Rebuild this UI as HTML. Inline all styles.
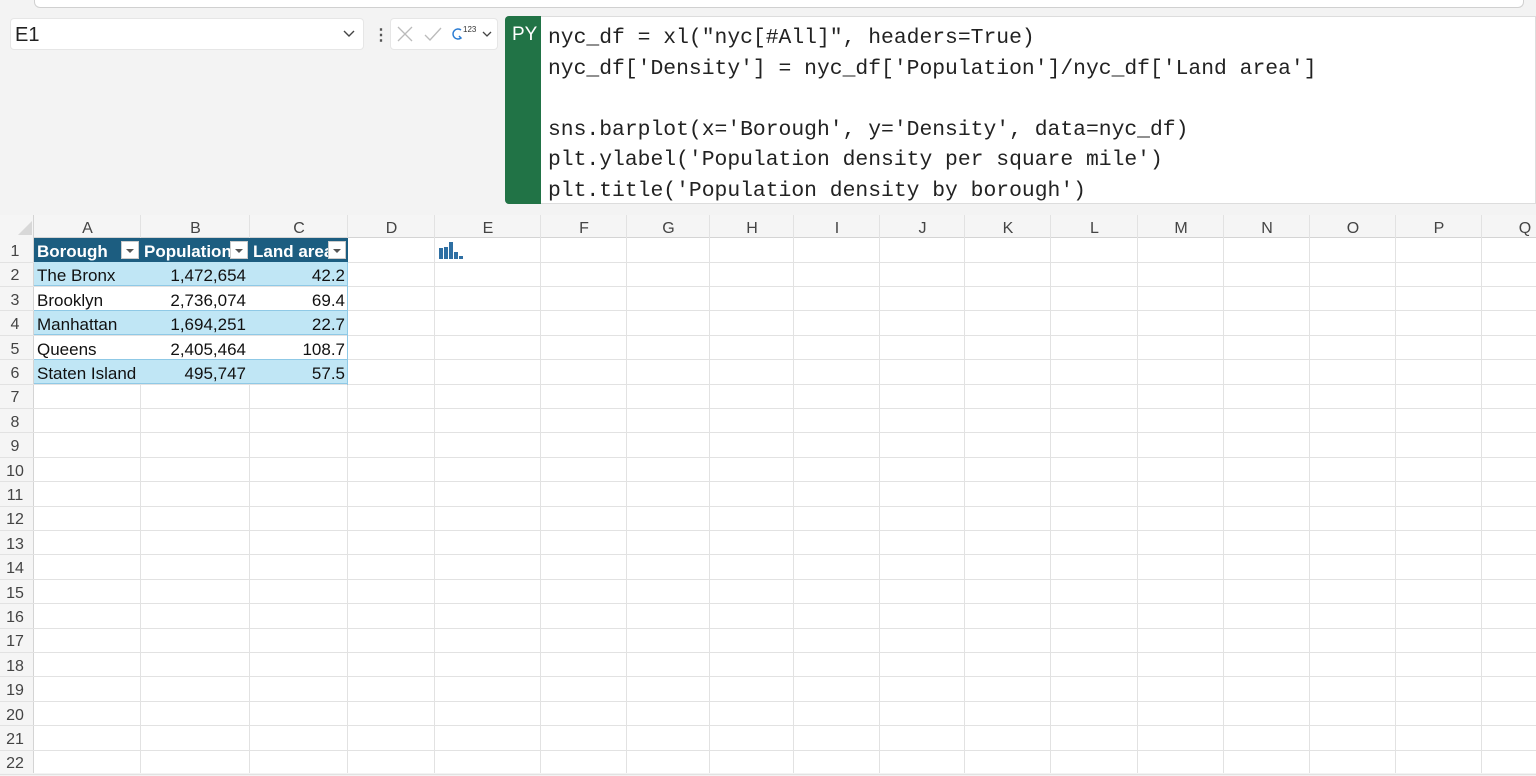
<!DOCTYPE html>
<html><head><meta charset="utf-8"><style>
*{margin:0;padding:0;box-sizing:border-box}
body{width:1536px;height:773px;overflow:hidden;background:#f3f3f3;font-family:"Liberation Sans",sans-serif;position:relative}
.a{position:absolute}
.code{font-family:"Liberation Mono",monospace;font-size:21.35px;color:#222;line-height:30.6px;white-space:pre}
.ch{font-size:16px;color:#444;text-align:center;line-height:23px;padding-top:2px}
.cell{font-size:17px;line-height:24px;padding:2px 3px 0;white-space:nowrap;overflow:hidden}
</style></head><body>
<div class="a" style="left:34px;top:0;width:1490px;height:8px;background:#fff;border:1px solid #d0d0d0;border-top:none;border-radius:0 0 6px 6px"></div>
<div class="a" style="left:10px;top:18px;width:354px;height:32px;background:#fff;border-radius:4px;border:1px solid #e6e6e6"></div>
<div class="a" style="left:15px;top:24px;font-size:20px;color:#222">E1</div>
<svg class="a" style="left:342px;top:29px" width="14" height="10"><path d="M2 2l5 5 5-5" stroke="#444" stroke-width="1.4" fill="none"/></svg>
<div class="a" style="left:373px;top:25px;font-size:16px;color:#555;font-weight:bold">&#8942;</div>
<div class="a" style="left:390px;top:18px;width:108px;height:32px;background:#fff;border-radius:4px;border:1px solid #e6e6e6"></div>
<svg class="a" style="left:395px;top:24px" width="105" height="22"><path d="M3 3l14 14M17 3L3 17" stroke="#bbb" stroke-width="1.3" fill="none"/><path d="M30 11l5 5 11-12" stroke="#bbb" stroke-width="1.3" fill="none"/><path d="M66 6a5 5 0 1 0 0 8l-2-2" stroke="#2b7cd3" stroke-width="1.5" fill="none"/><text x="68" y="8" font-size="8" fill="#333" font-family="Liberation Sans">123</text><path d="M88 8l4 4 4-4" stroke="#444" stroke-width="1.3" fill="none"/></svg>
<div class="a" style="left:505px;top:16px;width:1031px;height:188px;background:#fff;border:1px solid #ddd;border-radius:4px 0 0 4px"></div>
<div class="a" style="left:505px;top:16px;width:36px;height:188px;background:#217346;border-radius:4px 0 0 4px"></div>
<div class="a" style="left:512px;top:24px;color:#fff;font-size:19px">PY</div>
<div class="a code" style="left:548px;top:23px">nyc_df = xl("nyc[#All]", headers=True)
nyc_df['Density'] = nyc_df['Population']/nyc_df['Land area']

sns.barplot(x='Borough', y='Density', data=nyc_df)
plt.ylabel('Population density per square mile')
plt.title('Population density by borough')</div>
<div id="g" class="a" style="left:0;top:215px;width:1536px;height:558px;background:#fff"></div>
<script>
var g=document.getElementById('g');
var cols=[34,141,250,348,435,541,627,710,794,880,965,1051,1138,1224,1310,1396,1482,1568];
var L="ABCDEFGHIJKLMNOPQ";var h='';
h+='<div class="a" style="left:0;top:0;width:1536px;height:23px;background:#f5f5f5;border-bottom:1px solid #d4d4d4"></div>';
h+='<div class="a" style="left:0;top:0;width:34px;height:558px;background:#f5f5f5;border-right:1px solid #d4d4d4"></div>';
h+='<svg class="a" style="left:18px;top:6px" width="14" height="14"><path d="M14 0V14H0Z" fill="#d8d8d8"/></svg>';
for(var i=0;i<17;i++){var x=cols[i],w=cols[i+1]-x;
h+='<div class="a ch" style="left:'+x+'px;top:0;width:'+w+'px">'+L[i]+'</div>';
h+='<div class="a" style="left:'+(cols[i+1]-1)+'px;top:0;width:1px;height:558px;background:#e2e2e2"></div>';}
for(var r=1;r<=22;r++){var y=23+(r-1)*24.4;
h+='<div class="a ch" style="left:0;top:'+y+'px;width:30px;line-height:24px">'+r+'</div>';
h+='<div class="a" style="left:0;top:'+(y+23.5)+'px;width:1536px;height:1px;background:#e2e2e2"></div>';}
var d=[["The Bronx","1,472,654","42.2"],["Brooklyn","2,736,074","69.4"],["Manhattan","1,694,251","22.7"],["Queens","2,405,464","108.7"],["Staten Island","495,747","57.5"]];
h+='<div class="a" style="left:34px;top:23px;width:314px;height:24px;background:#1c5d80"></div>';
var hd=["Borough","Population","Land area"];
for(var i=0;i<3;i++){h+='<div class="a cell" style="left:'+cols[i]+'px;top:23px;width:'+(cols[i+1]-cols[i]-20)+'px;color:#fff;font-weight:bold">'+hd[i]+'</div>';
h+='<div class="a" style="left:'+(cols[i+1]-20)+'px;top:26px;width:18px;height:18px;background:#fff;border:1px solid #ccc"><svg width="16" height="16"><path d="M4 7h8l-4 4z" fill="#555"/></svg></div>';}
for(var r=0;r<5;r++){var y=23+(r+1)*24.4;
h+='<div class="a" style="left:34px;top:'+y+'px;width:314px;height:24px;background:'+(r%2==0?'#c0e6f5':'#fff')+';border-bottom:1px solid #8fc9e6"></div>';
h+='<div class="a cell" style="left:34px;top:'+y+'px;width:107px;color:#111">'+d[r][0]+'</div>';
h+='<div class="a cell" style="left:141px;top:'+y+'px;width:108px;text-align:right;color:#111">'+d[r][1]+'</div>';
h+='<div class="a cell" style="left:250px;top:'+y+'px;width:98px;text-align:right;color:#111">'+d[r][2]+'</div>';}
h+='<div class="a" style="left:347px;top:47px;width:1px;height:123px;background:#8fc9e6"></div>';
h+='<svg class="a" style="left:437px;top:25px" width="30" height="22"><rect x="2" y="8" width="4" height="11" fill="#2e6fa3"/><rect x="7" y="7" width="4" height="12" fill="#2e6fa3"/><rect x="12" y="2" width="4" height="17" fill="#2e6fa3"/><rect x="17" y="12" width="4" height="7" fill="#2e6fa3"/><rect x="22" y="16" width="4" height="3" fill="#2e6fa3"/></svg>';
g.innerHTML=h;
</script>
</body></html>
